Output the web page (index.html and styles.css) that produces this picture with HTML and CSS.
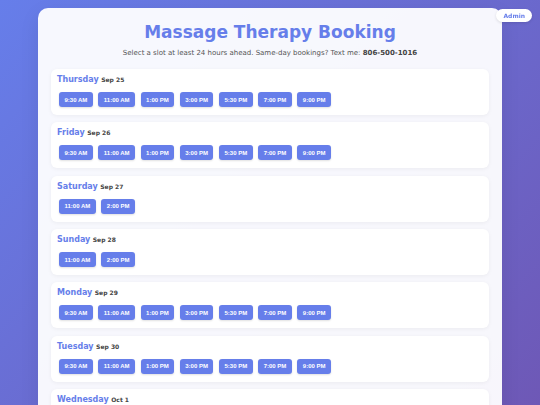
FILE: index.html
```html
<!DOCTYPE html>
<html>
<head>
<meta charset="utf-8">
<link rel="stylesheet" href="styles.css">
</head>
<body>
<button class="admin">Admin</button>
<div class="container">
  <h1 class="title">Massage Therapy Booking</h1>
  <p class="subtitle">Select a slot at least 24 hours ahead. Same-day bookings? Text me: <strong>806-500-1016</strong></p>
  <div class="days">
    <div class="day">
      <div class="day-head"><span class="day-name">Thursday</span> <span class="day-date">Sep 25</span></div>
      <div class="slots"><button class="slot">9:30 AM</button><button class="slot">11:00 AM</button><button class="slot">1:00 PM</button><button class="slot">3:00 PM</button><button class="slot">5:30 PM</button><button class="slot">7:00 PM</button><button class="slot">9:00 PM</button></div>
    </div>
    <div class="day">
      <div class="day-head"><span class="day-name">Friday</span> <span class="day-date">Sep 26</span></div>
      <div class="slots"><button class="slot">9:30 AM</button><button class="slot">11:00 AM</button><button class="slot">1:00 PM</button><button class="slot">3:00 PM</button><button class="slot">5:30 PM</button><button class="slot">7:00 PM</button><button class="slot">9:00 PM</button></div>
    </div>
    <div class="day">
      <div class="day-head"><span class="day-name">Saturday</span> <span class="day-date">Sep 27</span></div>
      <div class="slots"><button class="slot">11:00 AM</button><button class="slot">2:00 PM</button></div>
    </div>
    <div class="day">
      <div class="day-head"><span class="day-name">Sunday</span> <span class="day-date">Sep 28</span></div>
      <div class="slots"><button class="slot">11:00 AM</button><button class="slot">2:00 PM</button></div>
    </div>
    <div class="day">
      <div class="day-head"><span class="day-name">Monday</span> <span class="day-date">Sep 29</span></div>
      <div class="slots"><button class="slot">9:30 AM</button><button class="slot">11:00 AM</button><button class="slot">1:00 PM</button><button class="slot">3:00 PM</button><button class="slot">5:30 PM</button><button class="slot">7:00 PM</button><button class="slot">9:00 PM</button></div>
    </div>
    <div class="day">
      <div class="day-head"><span class="day-name">Tuesday</span> <span class="day-date">Sep 30</span></div>
      <div class="slots"><button class="slot">9:30 AM</button><button class="slot">11:00 AM</button><button class="slot">1:00 PM</button><button class="slot">3:00 PM</button><button class="slot">5:30 PM</button><button class="slot">7:00 PM</button><button class="slot">9:00 PM</button></div>
    </div>
    <div class="day">
      <div class="day-head"><span class="day-name">Wednesday</span> <span class="day-date">Oct 1</span></div>
      <div class="slots"><button class="slot">9:30 AM</button><button class="slot">11:00 AM</button><button class="slot">1:00 PM</button><button class="slot">3:00 PM</button><button class="slot">5:30 PM</button><button class="slot">7:00 PM</button><button class="slot">9:00 PM</button></div>
    </div>
    <div class="day">
      <div class="day-head"><span class="day-name">Thursday</span> <span class="day-date">Oct 2</span></div>
      <div class="slots"><button class="slot">9:30 AM</button><button class="slot">11:00 AM</button><button class="slot">1:00 PM</button><button class="slot">3:00 PM</button><button class="slot">5:30 PM</button><button class="slot">7:00 PM</button><button class="slot">9:00 PM</button></div>
    </div>
  </div>
</div>
</body>
</html>
```
FILE: styles.css
```css
html {
  min-height: 100%;
}
body {
  margin: 0;
  padding: 8px 0;
  min-height: 100vh;
  font-family: "DejaVu Sans", Verdana, sans-serif;
  background: linear-gradient(135deg, #667eea 0%, #6e58b6 100%);
  background-attachment: fixed;
}
.container {
  width: 438px;
  margin: 0 auto;
  padding: 13px 13px 20px;
  background: rgba(255, 255, 255, 0.95);
  border-radius: 10px;
  box-shadow: 0 6px 20px rgba(0, 0, 0, 0.08);
}
.title {
  margin: 0;
  text-align: center;
  color: #667eea;
  font-size: 17px;
  font-weight: bold;
  line-height: 22px;
}
.subtitle {
  margin: 5px 0 11px;
  text-align: center;
  color: #555;
  font-size: 7px;
  line-height: 10px;
}
.subtitle strong {
  color: #444;
}
.days {
  display: flex;
  flex-direction: column;
  gap: 7.35px;
}
.day {
  background: #fff;
  border-radius: 6px;
  padding: 5px 6px 8px;
  box-shadow: 0 1px 4px rgba(0, 0, 0, 0.05);
}
.day-head {
  font-size: 8px;
  line-height: 11px;
  height: 11px;
  margin-bottom: 7px;
}
.day-name {
  color: #667eea;
  font-size: 8px;
  font-weight: bold;
}
.day-date {
  color: #444;
  font-size: 6px;
  font-weight: bold;
}
.slots {
  display: flex;
  gap: 5.5px;
  padding-left: 2px;
}
.slot {
  border: none;
  background: #667eea;
  color: #fff;
  font-family: "Liberation Sans", Arial, sans-serif;
  font-size: 6px;
  font-weight: bold;
  height: 15px;
  padding: 0 5.5px;
  border-radius: 3px;
  box-shadow: 0 1px 2px rgba(0, 0, 0, 0.12);
}
.admin {
  position: fixed;
  top: 9px;
  right: 8px;
  border: none;
  background: #fff;
  color: #667eea;
  font-family: "DejaVu Sans", Verdana, sans-serif;
  font-size: 6px;
  font-weight: bold;
  height: 13px;
  padding: 0 7px;
  border-radius: 7px;
  box-shadow: 0 1px 3px rgba(0, 0, 0, 0.12);
}
```
